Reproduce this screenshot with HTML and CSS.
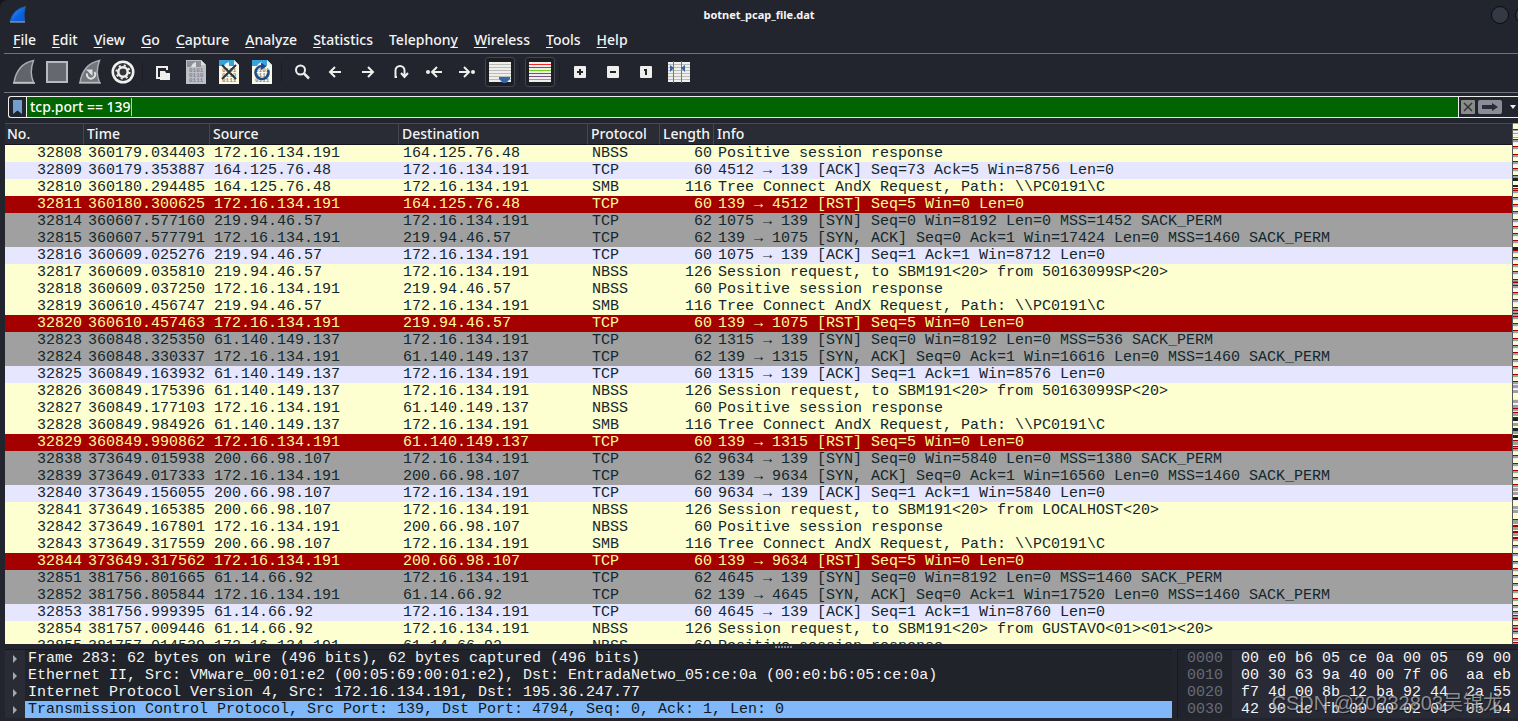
FILE: index.html
```html
<!DOCTYPE html>
<html lang="en">
<head>
<meta charset="utf-8">
<title>botnet_pcap_file.dat</title>
<link rel="stylesheet" href="styles.css">
</head>
<body>
<div class="window">
<header class="titlebar">
  <svg class="app-icon" width="18" height="18" viewBox="0 0 18 18" aria-hidden="true"><defs><linearGradient id="fin" x1="0" y1="0" x2="1" y2="1"><stop offset="0" stop-color="#3b9cff"/><stop offset=".6" stop-color="#0a62e0"/><stop offset="1" stop-color="#0a56cc"/></linearGradient></defs><path d="M1 15.500Q4 3 16.500.500Q14 8 15.500 15.500Z" fill="url(#fin)" stroke="#1c59ae"/><path d="M1 16h15" stroke="#9fb9dd"/></svg>
  <h1 class="title">botnet_pcap_file.dat</h1>
  <div class="window-buttons"><button aria-label="Minimize"></button><button aria-label="Maximize"></button></div>
</header>
<nav class="menubar">
  <button><u>F</u>ile</button><button><u>E</u>dit</button><button><u>V</u>iew</button><button><u>G</u>o</button><button><u>C</u>apture</button><button><u>A</u>nalyze</button><button><u>S</u>tatistics</button><button>Telephon<u>y</u></button><button><u>W</u>ireless</button><button><u>T</u>ools</button><button><u>H</u>elp</button>
</nav>
<div class="toolbar">
  <button aria-label="Start capture"><svg width="24" height="26" viewBox="0 0 24 26"><path d="M2 23.500Q5 5 21.500 1.500Q17 13 21.500 23.500Z" fill="#62646b" stroke="#aaacb2" stroke-width="1.500"/><path d="M1 24h22" stroke="#c6c7cb" stroke-width="1.500"/></svg></button>
  <button aria-label="Stop capture"><svg width="24" height="26" viewBox="0 0 24 26"><rect x="2" y="3" width="20" height="20" fill="#66686f" stroke="#b8bac2" stroke-width="2"/></svg></button>
  <button aria-label="Restart capture"><svg width="24" height="26" viewBox="0 0 24 26"><path d="M2 23.500Q5 5 21.500 1.500Q17 13 21.500 23.500Z" fill="#74767c" stroke="#aaacb2" stroke-width="1.500"/><path d="M1 24h22" stroke="#c6c7cb"/><path d="M9 14.500a4.200 4.200 0 1 0 7.500-1.500" fill="none" stroke="#dfe0e2" stroke-width="2"/><path d="M8 10.500h6.500V17z" fill="#dfe0e2"/></svg></button>
  <button aria-label="Capture options"><svg width="24" height="26" viewBox="0 0 24 26"><circle cx="12" cy="13" r="11.500" fill="#f1f1f0"/><circle cx="12" cy="13" r="9" fill="#34363a"/><circle cx="12" cy="13" r="6.500" fill="none" stroke="#f1f1f0" stroke-width="2" stroke-dasharray="2 3.100"/><circle cx="12" cy="13" r="4.700" fill="none" stroke="#f1f1f0" stroke-width="2.500"/></svg></button>
  <span class="sep"></span>
  <button aria-label="Open"><svg width="24" height="26" viewBox="0 0 24 26"><path d="M9 19H6V8h10v3" fill="none" stroke="#eeeeec" stroke-width="2"/><path d="M9 12h5l1 2h4v7H9z" fill="#eeeeec"/></svg></button>
  <button aria-label="Save"><svg width="24" height="26" viewBox="0 0 24 26"><path d="M2 1h15l5 5v19H2z" fill="#bfc0c6"/><path d="M3 2h14v6H3z" fill="#8d9098"/><path d="M7 8Q8 4 12 3v5zM17 1v5h5z" fill="#dfe0e4"/><g class="bits" fill="#83858c"><text x="5" y="13">0101</text><text x="5" y="18">0110</text><text x="5" y="23">0111</text></g></svg></button>
  <button aria-label="Close file"><svg width="24" height="26" viewBox="0 0 24 26"><path d="M2 1h15l5 5v19H2z" fill="#fbfae6"/><path d="M2 1h15v6H2z" fill="#36a3dc"/><path d="M7 7Q8 4 12 3v4zM17 1v5h5z" fill="#e5f2f6"/><g class="bits" fill="#8b8c87"><text x="5" y="13">0101</text><text x="5" y="18">0110</text><text x="5" y="23">0111</text></g><path d="M5 6l14 14M19 6L5 20" stroke="#2e3436" stroke-width="2"/></svg></button>
  <button aria-label="Reload file"><svg width="24" height="26" viewBox="0 0 24 26"><path d="M2 1h15l5 5v19H2z" fill="#fbfae6"/><path d="M2 1h15v6H2z" fill="#36a3dc"/><path d="M7 7Q8 4 12 3v4zM17 1v5h5z" fill="#e5f2f6"/><g class="bits" fill="#8b8c87"><text x="5" y="13">0101</text><text x="5" y="18">0110</text><text x="5" y="23">0111</text></g><path d="M18 11A6.500 6.500 0 1 1 12 7" fill="none" stroke="#204a87" stroke-width="2.500"/><path d="M11 3.500l5.500 4L11 11z" fill="#204a87"/></svg></button>
  <span class="sep"></span>
  <button aria-label="Find packet"><svg width="24" height="26" viewBox="0 0 24 26"><circle cx="10.500" cy="11" r="4.500" fill="none" stroke="#eeeeec" stroke-width="2"/><path d="M14 14.500l5 5" stroke="#eeeeec" stroke-width="2.500"/></svg></button>
  <button aria-label="Go back"><svg width="24" height="26" viewBox="0 0 24 26"><path d="M18 13H7M12 8l-5 5 5 5" fill="none" stroke="#eeeeec" stroke-width="2"/></svg></button>
  <button aria-label="Go forward"><svg width="24" height="26" viewBox="0 0 24 26"><path d="M6 13h11M12 8l5 5-5 5" fill="none" stroke="#eeeeec" stroke-width="2"/></svg></button>
  <button aria-label="Go to packet"><svg width="24" height="26" viewBox="0 0 24 26"><path d="M8 18H6.500v-6.500a4.500 4.500 0 0 1 9 0V17M12 14l3.500 4 3.500-4" fill="none" stroke="#eeeeec" stroke-width="2"/></svg></button>
  <button aria-label="First packet"><svg width="24" height="26" viewBox="0 0 24 26"><path d="M20 13h-9M15 8l-5 5 5 5" fill="none" stroke="#eeeeec" stroke-width="2"/><circle cx="6" cy="13" r="2" fill="#eeeeec"/></svg></button>
  <button aria-label="Last packet"><svg width="24" height="26" viewBox="0 0 24 26"><path d="M4 13h9M9 8l5 5-5 5" fill="none" stroke="#eeeeec" stroke-width="2"/><circle cx="18" cy="13" r="2" fill="#eeeeec"/></svg></button>
  <button class="on" aria-label="Auto scroll"><svg width="24" height="22" viewBox="0 0 24 22"><path d="M1 1h22v20H1z" fill="#eeeeec"/><path d="M1 3.500h22M1 6.500h22M1 9.500h22M1 12.500h22M1 15.500h22M1 18.500h22" stroke="#babdb6"/><path d="M11 16h11v2l-4 4h-3l-4-4z" fill="#3465a4"/></svg></button>
  <span class="sep"></span>
  <button class="on" aria-label="Colorize"><svg width="24" height="22" viewBox="0 0 24 22"><path d="M1 1h22v20H1z" fill="#eeeeec"/><path d="M1 3.500h22" stroke="#ef2929"/><path d="M1 6.500h22M1 12.500h22" stroke="#3465a4"/><path d="M1 9.500h22" stroke="#73d216"/><path d="M1 15.500h22" stroke="#75507b"/><path d="M1 18.500h22" stroke="#c4a000"/></svg></button>
  <span class="sep"></span>
  <button aria-label="Zoom in"><svg width="24" height="26" viewBox="0 0 24 26"><rect x="6" y="7" width="12" height="12" rx="1" fill="#eeeeec"/><path d="M9 13h6M12 10v6" stroke="#23252d" stroke-width="2"/></svg></button>
  <button aria-label="Zoom out"><svg width="24" height="26" viewBox="0 0 24 26"><rect x="6" y="7" width="12" height="12" rx="1" fill="#eeeeec"/><path d="M9 13h6" stroke="#23252d" stroke-width="2"/></svg></button>
  <button aria-label="Normal size"><svg width="24" height="26" viewBox="0 0 24 26"><rect x="6" y="7" width="12" height="12" rx="1" fill="#eeeeec"/><path d="M10 11h2v5" fill="none" stroke="#23252d" stroke-width="2"/></svg></button>
  <button aria-label="Resize columns"><svg width="24" height="22" viewBox="0 0 24 22"><path d="M1 1h22v20H1z" fill="#eeeeec"/><path d="M1 3.500h22M1 6.500h22M1 9.500h22M1 12.500h22M1 15.500h22M1 18.500h22" stroke="#babdb6"/><path d="M6.500 0v22M14.500 0v22" stroke="#75777a"/><path d="M3 4l4 3-4 4zM18 4l-4 3 4 4z" fill="#3465a4"/></svg></button>
</div>
<div class="filterbar">
  <button class="bookmark" aria-label="Filter bookmarks"><svg width="9" height="16" viewBox="0 0 9 16"><path d="M0 1h9v14l-4.500-3.500L0 15z" fill="#729fcf"/></svg></button>
  <label class="filter"><input type="text" aria-label="Display filter" value="tcp.port == 139"><span class="caret"></span></label>
  <button class="clear" aria-label="Clear filter"><svg width="14" height="14" viewBox="0 0 14 14"><rect width="14" height="14" rx="1" fill="#8b8c87"/><path d="M3 3l8 8M11 3l-8 8" stroke="#32353a" stroke-width="1.500"/></svg></button>
  <button aria-label="Apply filter"><svg width="24" height="14" viewBox="0 0 24 14"><rect width="24" height="14" rx="2" fill="#8a8d97"/><path d="M4 5h10V3l6 4-6 4V9H4z" fill="#2a2d35"/></svg></button>
  <button class="history" aria-label="Filter history"><svg width="6" height="4" viewBox="0 0 6 4"><path d="M0 0h6L3 4z" fill="#eeeeec"/></svg></button>
</div>
<main class="packets">
<div class="list">
<table>
<colgroup><col class="c-no"><col class="c-time"><col class="c-addr"><col class="c-addr"><col class="c-proto"><col class="c-len"><col></colgroup>
<thead><tr><th>No.<th>Time<th>Source<th>Destination<th>Protocol<th>Length<th>Info</tr></thead>
<tbody>
<tr class="smb"><td>32808<td>360179.034403<td>172.16.134.191<td>164.125.76.48<td>NBSS<td>60<td>Positive session response</tr>
<tr class="tcp"><td>32809<td>360179.353887<td>164.125.76.48<td>172.16.134.191<td>TCP<td>60<td>4512 → 139 [ACK] Seq=73 Ack=5 Win=8756 Len=0</tr>
<tr class="smb"><td>32810<td>360180.294485<td>164.125.76.48<td>172.16.134.191<td>SMB<td>116<td>Tree Connect AndX Request, Path: \\PC0191\C</tr>
<tr class="rst"><td>32811<td>360180.300625<td>172.16.134.191<td>164.125.76.48<td>TCP<td>60<td>139 → 4512 [RST] Seq=5 Win=0 Len=0</tr>
<tr class="syn"><td>32814<td>360607.577160<td>219.94.46.57<td>172.16.134.191<td>TCP<td>62<td>1075 → 139 [SYN] Seq=0 Win=8192 Len=0 MSS=1452 SACK_PERM</tr>
<tr class="syn"><td>32815<td>360607.577791<td>172.16.134.191<td>219.94.46.57<td>TCP<td>62<td>139 → 1075 [SYN, ACK] Seq=0 Ack=1 Win=17424 Len=0 MSS=1460 SACK_PERM</tr>
<tr class="tcp"><td>32816<td>360609.025276<td>219.94.46.57<td>172.16.134.191<td>TCP<td>60<td>1075 → 139 [ACK] Seq=1 Ack=1 Win=8712 Len=0</tr>
<tr class="smb"><td>32817<td>360609.035810<td>219.94.46.57<td>172.16.134.191<td>NBSS<td>126<td>Session request, to SBM191&lt;20&gt; from 50163099SP&lt;20&gt;</tr>
<tr class="smb"><td>32818<td>360609.037250<td>172.16.134.191<td>219.94.46.57<td>NBSS<td>60<td>Positive session response</tr>
<tr class="smb"><td>32819<td>360610.456747<td>219.94.46.57<td>172.16.134.191<td>SMB<td>116<td>Tree Connect AndX Request, Path: \\PC0191\C</tr>
<tr class="rst"><td>32820<td>360610.457463<td>172.16.134.191<td>219.94.46.57<td>TCP<td>60<td>139 → 1075 [RST] Seq=5 Win=0 Len=0</tr>
<tr class="syn"><td>32823<td>360848.325350<td>61.140.149.137<td>172.16.134.191<td>TCP<td>62<td>1315 → 139 [SYN] Seq=0 Win=8192 Len=0 MSS=536 SACK_PERM</tr>
<tr class="syn"><td>32824<td>360848.330337<td>172.16.134.191<td>61.140.149.137<td>TCP<td>62<td>139 → 1315 [SYN, ACK] Seq=0 Ack=1 Win=16616 Len=0 MSS=1460 SACK_PERM</tr>
<tr class="tcp"><td>32825<td>360849.163932<td>61.140.149.137<td>172.16.134.191<td>TCP<td>60<td>1315 → 139 [ACK] Seq=1 Ack=1 Win=8576 Len=0</tr>
<tr class="smb"><td>32826<td>360849.175396<td>61.140.149.137<td>172.16.134.191<td>NBSS<td>126<td>Session request, to SBM191&lt;20&gt; from 50163099SP&lt;20&gt;</tr>
<tr class="smb"><td>32827<td>360849.177103<td>172.16.134.191<td>61.140.149.137<td>NBSS<td>60<td>Positive session response</tr>
<tr class="smb"><td>32828<td>360849.984926<td>61.140.149.137<td>172.16.134.191<td>SMB<td>116<td>Tree Connect AndX Request, Path: \\PC0191\C</tr>
<tr class="rst"><td>32829<td>360849.990862<td>172.16.134.191<td>61.140.149.137<td>TCP<td>60<td>139 → 1315 [RST] Seq=5 Win=0 Len=0</tr>
<tr class="syn"><td>32838<td>373649.015938<td>200.66.98.107<td>172.16.134.191<td>TCP<td>62<td>9634 → 139 [SYN] Seq=0 Win=5840 Len=0 MSS=1380 SACK_PERM</tr>
<tr class="syn"><td>32839<td>373649.017333<td>172.16.134.191<td>200.66.98.107<td>TCP<td>62<td>139 → 9634 [SYN, ACK] Seq=0 Ack=1 Win=16560 Len=0 MSS=1460 SACK_PERM</tr>
<tr class="tcp"><td>32840<td>373649.156055<td>200.66.98.107<td>172.16.134.191<td>TCP<td>60<td>9634 → 139 [ACK] Seq=1 Ack=1 Win=5840 Len=0</tr>
<tr class="smb"><td>32841<td>373649.165385<td>200.66.98.107<td>172.16.134.191<td>NBSS<td>126<td>Session request, to SBM191&lt;20&gt; from LOCALHOST&lt;20&gt;</tr>
<tr class="smb"><td>32842<td>373649.167801<td>172.16.134.191<td>200.66.98.107<td>NBSS<td>60<td>Positive session response</tr>
<tr class="smb"><td>32843<td>373649.317559<td>200.66.98.107<td>172.16.134.191<td>SMB<td>116<td>Tree Connect AndX Request, Path: \\PC0191\C</tr>
<tr class="rst"><td>32844<td>373649.317562<td>172.16.134.191<td>200.66.98.107<td>TCP<td>60<td>139 → 9634 [RST] Seq=5 Win=0 Len=0</tr>
<tr class="syn"><td>32851<td>381756.801665<td>61.14.66.92<td>172.16.134.191<td>TCP<td>62<td>4645 → 139 [SYN] Seq=0 Win=8192 Len=0 MSS=1460 SACK_PERM</tr>
<tr class="syn"><td>32852<td>381756.805844<td>172.16.134.191<td>61.14.66.92<td>TCP<td>62<td>139 → 4645 [SYN, ACK] Seq=0 Ack=1 Win=17520 Len=0 MSS=1460 SACK_PERM</tr>
<tr class="tcp"><td>32853<td>381756.999395<td>61.14.66.92<td>172.16.134.191<td>TCP<td>60<td>4645 → 139 [ACK] Seq=1 Ack=1 Win=8760 Len=0</tr>
<tr class="smb"><td>32854<td>381757.009446<td>61.14.66.92<td>172.16.134.191<td>NBSS<td>126<td>Session request, to SBM191&lt;20&gt; from GUSTAVO&lt;01&gt;&lt;01&gt;&lt;20&gt;</tr>
<tr class="smb"><td>32855<td>381757.014539<td>172.16.134.191<td>61.14.66.92<td>NBSS<td>60<td>Positive session response</tr>
</tbody>
</table>
</div>
<svg class="minimap" viewBox="0 0 5 521" preserveAspectRatio="none" shape-rendering="crispEdges" aria-hidden="true">
<rect width="5" height="521" fill="#feffd0"/>
<defs><path id="ticks" d="M0 16h5M0 23h5M0 31h5M0 38h5M0 45h5M0 52h5M0 65h5M0 67h5M0 74h5M0 81h5M0 88h5M0 96h5M0 103h5M0 110h5M0 117h5M0 127h5M0 134h5M0 141h5M0 148h5M0 156h5M0 159h5M0 162h5M0 169h5M0 176h5M0 184h5M0 187h5M0 190h5M0 193h5M0 200h5M0 207h5M0 215h5M0 222h5M0 229h5M0 236h5M0 243h5M0 251h5M0 258h5M0 285h5M0 289h5M0 294h5M0 305h5M0 317h5M0 323h5M0 325h5M0 332h5M0 340h5M0 347h5M0 354h5M0 361h5M0 374h5M0 396h5M0 402h5M0 403h5M0 408h5M0 409h5M0 414h5M0 415h5M0 422h5M0 430h5M0 438h5M0 445h5M0 452h5M0 460h5M0 467h5M0 475h5M0 482h5M0 488h5M0 492h5M0 495h5M0 502h5M0 505h5M0 508h5M0 515h5M0 519h5"/></defs>
<g fill="none"><use href="#ticks" y="3.500" stroke="#e7e6ff"/><use href="#ticks" y="2" stroke="#a0a0a0" stroke-width="2"/>
<path d="M0 263.500h5M0 268.500h5M0 278.500h5M0 283.500h5M0 291.500h5M0 301.500h5M0 309.500h5M0 320.500h5M0 366.500h5M0 370.500h5M0 384.500h5M0 388.500h5M0 399.500h5M0 405.500h5M0 411.500h5" stroke="#a0a0a0" stroke-width="3"/>
<path d="M0 265.500h5M0 276.500h5M0 281.500h5M0 368.500h5M0 386.500h5M0 9.500h5M0 12.500h5" stroke="#e7e6ff"/>
<use href="#ticks" y=".5" stroke="#a40000"/>
<path d="M0 6.500h5" stroke="#a40000"/>
<path d="M0 56.500h5M0 125.500h5M0 296.500h5M0 306.500h5M0 313.500h5M0 375.500h5" stroke="#12272e" stroke-width="3"/><path d="M0 63h5" stroke="#12272e" stroke-width="2"/><path d="M0 .500h5M0 7.500h5M0 10.500h5M0 14.500h5" stroke="#a0a0a0"/><path d="M0 158.500h5" stroke="#3f6fd0"/></g>
</svg>
</main>
<div class="splitter"><i></i><i></i><i></i><i></i><i></i><i></i></div>
<section class="details">
  <ul class="tree">
    <li><button aria-label="Expand"></button><span>Frame 283: 62 bytes on wire (496 bits), 62 bytes captured (496 bits)</span></li>
    <li><button aria-label="Expand"></button><span>Ethernet II, Src: VMware_00:01:e2 (00:05:69:00:01:e2), Dst: EntradaNetwo_05:ce:0a (00:e0:b6:05:ce:0a)</span></li>
    <li><button aria-label="Expand"></button><span>Internet Protocol Version 4, Src: 172.16.134.191, Dst: 195.36.247.77</span></li>
    <li class="selected"><button aria-label="Expand"></button><span>Transmission Control Protocol, Src Port: 139, Dst Port: 4794, Seq: 0, Ack: 1, Len: 0</span></li>
  </ul>
  <div class="hex">
    <pre class="offsets">0000
0010
0020
0030</pre>
    <pre class="bytes">00 e0 b6 05 ce 0a 00 05  69 00
00 30 63 9a 40 00 7f 06  aa eb
f7 4d 00 8b 12 ba 92 44  2a 55
42 90 dc fb 00 00 02 04  05 b4</pre>
  </div>
</section>
<div class="watermark">CSDN @20232803吴锦龙</div>
</div>
</body>
</html>
```
FILE: styles.css
```css
* { box-sizing: border-box; }
body {
  margin: 0;
  background: #14161b;
  color: #f4f4f4;
  font: 500 14px/20px "Noto Sans", sans-serif;
}
button {
  margin: 0;
  padding: 0;
  border: 0;
  background: none;
  color: inherit;
  font: inherit;
}
.window {
  position: relative;
  display: flex;
  flex-direction: column;
  height: 100vh;
  overflow: hidden;
  border-top-left-radius: 8px;
  background: #23252e;
}
.titlebar {
  display: grid;
  grid-template-columns: 1fr auto 1fr;
  align-items: center;
  height: 29px;
  flex: none;
}
.app-icon { margin-left: 9px; }
.title {
  margin: 0;
  font-size: 11px;
  font-weight: 700;
}
.window-buttons {
  display: flex;
  gap: 6px;
  justify-content: flex-end;
  margin-right: -15px;
}
.window-buttons button {
  width: 18px;
  height: 18px;
  border: 1px solid #0b0c0f;
  border-radius: 50%;
  background: #353945;
}
.menubar {
  display: flex;
  flex: none;
  height: 25px;
  margin-left: 4px;
  padding-left: 1px;
  border-bottom: 1px solid #70717c;
}
.menubar button {
  height: 22px;
  padding: 0 8px;
  line-height: 22px;
}
.menubar u {
  text-decoration-thickness: 1px;
  text-underline-offset: 2px;
  text-decoration-skip-ink: none;
}
.toolbar {
  display: flex;
  flex: none;
  align-items: center;
  height: 39px;
  margin-left: 4px;
  padding: 0 0 2px 3px;
  border-bottom: 1px solid #70717c;
}
.toolbar button {
  display: flex;
  align-items: center;
  justify-content: center;
  width: 30px;
  height: 30px;
  margin: 0 1px 0 2px;
  border: 1px solid transparent;
  border-radius: 3px;
}
.toolbar svg { flex: none; }
.toolbar .on {
  border-color: #43464e;
  background: #1c1e24;
}
.sep {
  width: 1px;
  height: 20px;
  margin: 0 3px;
  background: #1c1e24;
}
.bits { font: bold 6px "Liberation Mono", monospace; }
.filterbar {
  display: flex;
  flex: none;
  align-items: center;
  height: 22px;
  margin: 3px 0 5px 8px;
  border: 1px solid #eeeeec;
  border-right: 0;
  border-radius: 3px 0 0 3px;
}
.filterbar button {
  display: flex;
  margin-left: 3px;
}
.filterbar .bookmark { margin: 0 4px; }
.filterbar .clear { margin-left: 2px; }
.filterbar .history { margin: 0 2px 0 8px; }
.filter {
  display: flex;
  flex: 1;
  align-items: center;
  align-self: stretch;
  padding-left: 3px;
  border: solid #eeeeec;
  border-width: 0 1px;
  background: #006400;
}
.filter input {
  field-sizing: content;
  padding: 0;
  border: 0;
  outline: 0;
  background: none;
  color: #fff;
  font: inherit;
}
.caret {
  width: 1px;
  height: 18px;
  background: #ff9bff;
}
.packets {
  display: flex;
  flex: 1;
  min-height: 0;
  margin-left: 5px;
}
.list {
  flex: 1;
  min-width: 0;
  overflow: hidden;
  background: #feffd0;
}
table {
  width: 100%;
  table-layout: fixed;
  border-collapse: separate;
  border-spacing: 0;
}
.c-no { width: 79px; }
.c-time { width: 126px; }
.c-addr { width: 189px; }
.c-proto { width: 72px; }
.c-len { width: 54px; }
th {
  height: 22px;
  padding: 0 2px;
  border-top: 1px solid #484b54;
  border-right: 1px solid #44474f;
  border-bottom: 1px solid #14161b;
  background: #292c35;
  font-weight: 500;
  line-height: 20px;
  text-align: left;
}
th + th { padding-left: 3px; }
th:last-child { border-right: 0; }
td {
  height: 17px;
  padding: 0 4px;
  overflow: hidden;
  font: 15px/17px "Liberation Mono", monospace;
  white-space: pre;
}
td:nth-child(1), td:nth-child(6) {
  padding-right: 2px;
  text-align: right;
}
.smb { background: #feffd0; color: #12272e; }
.tcp { background: #e7e6ff; color: #12272e; }
.rst { background: #a40000; color: #fffc9c; }
.syn { background: #a0a0a0; color: #12272e; }
.minimap {
  width: 6px;
  height: 100%;
  border-left: 1px solid #55575c;
}
.splitter {
  display: flex;
  flex: none;
  gap: 1px;
  justify-content: center;
  height: 5px;
  padding: 2px 0 0 48px;
}
.splitter i {
  width: 2px;
  height: 2px;
  background: #80828a;
}
.details {
  display: grid;
  flex: none;
  grid-template-columns: 1167fr 341fr;
  gap: 5px;
  padding: 0 0 3px 5px;
  font: 15px/17px "Liberation Mono", monospace;
}
.tree {
  min-width: 0;
  margin: 0;
  padding: 0;
  border-top: 1px solid #17191e;
  background: #21232b;
  list-style: none;
}
.tree li {
  display: flex;
  white-space: pre;
}
.tree button {
  flex: none;
  width: 20px;
  background: #292b35;
}
.tree button::before {
  content: "";
  display: block;
  width: 4px;
  margin-left: 8px;
  border: solid transparent;
  border-width: 4px 0 4px 4px;
  border-left-color: #a5a7ad;
}
.tree span {
  flex: 1;
  padding-left: 3px;
  overflow: hidden;
}
.selected span {
  background: #80b8f9;
  color: #101820;
}
.hex {
  display: flex;
  min-width: 0;
  overflow: hidden;
  border: solid #17191e;
  border-width: 1px 0 0 1px;
  background: #282a36;
}
.hex pre {
  margin: 0;
  font: inherit;
}
.offsets {
  padding: 0 9px;
  background: #22242d;
  color: #686b73;
}
.hex .bytes { padding-left: 9px; }
.watermark {
  position: absolute;
  right: 15px;
  bottom: 4px;
  color: #d0d0d0a0;
  font: 20px/28px "Liberation Sans", "Noto Sans CJK SC", sans-serif;
  text-shadow: 1px 1px 1px #0008;
}
```
